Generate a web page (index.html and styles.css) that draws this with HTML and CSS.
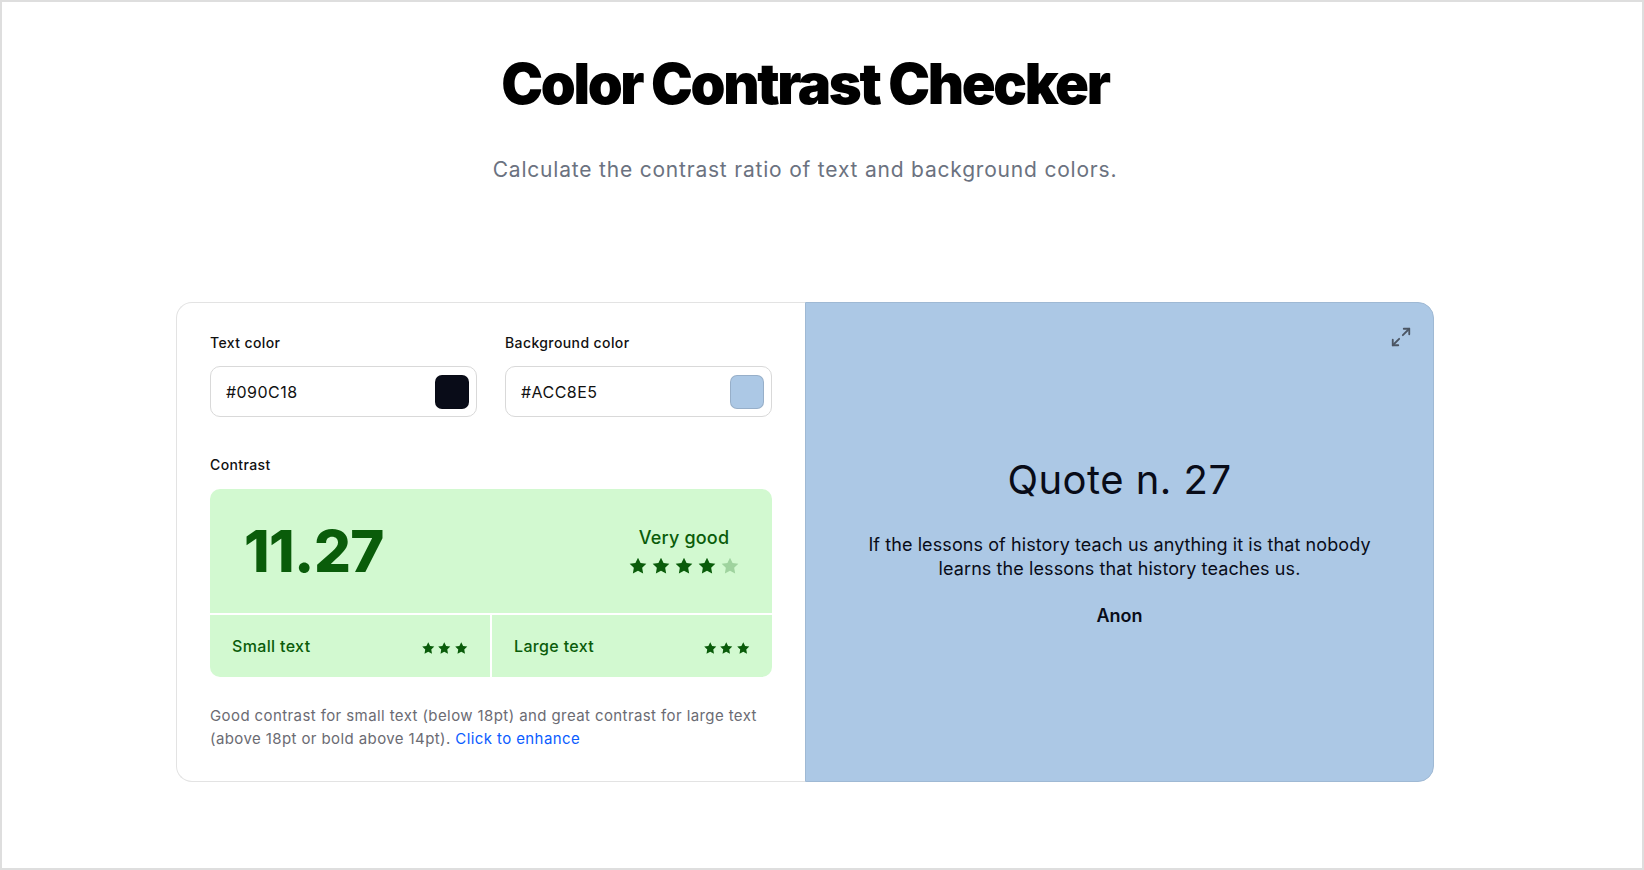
FILE: index.html
```html
<!DOCTYPE html>
<html lang="en">
<head>
<meta charset="utf-8">
<title>Color Contrast Checker</title>
<link rel="stylesheet" href="styles.css">
</head>
<body>
<div class="page">
  <h1 class="title">Color Contrast Checker</h1>
  <p class="subtitle">Calculate the contrast ratio of text and background colors.</p>

  <div class="card">
    <div class="controls">
      <div class="fields">
        <div class="field">
          <label class="label">Text color</label>
          <div class="input">
            <span class="input-value">#090C18</span>
            <span class="swatch swatch-dark"></span>
          </div>
        </div>
        <div class="field">
          <label class="label">Background color</label>
          <div class="input">
            <span class="input-value">#ACC8E5</span>
            <span class="swatch swatch-blue"></span>
          </div>
        </div>
      </div>

      <div class="label contrast-label">Contrast</div>
      <div class="result">
        <div class="result-main">
          <div class="ratio">11.27</div>
          <div class="rating">
            <div class="rating-text">Very good</div>
            <div class="stars stars-big">
              <svg viewBox="0 0 24 24"><path d="M12 2l3.09 6.26L22 9.27l-5 4.87 1.18 6.88L12 17.77l-6.18 3.25L7 14.14 2 9.27l6.91-1.01L12 2z"/></svg>
              <svg viewBox="0 0 24 24"><path d="M12 2l3.09 6.26L22 9.27l-5 4.87 1.18 6.88L12 17.77l-6.18 3.25L7 14.14 2 9.27l6.91-1.01L12 2z"/></svg>
              <svg viewBox="0 0 24 24"><path d="M12 2l3.09 6.26L22 9.27l-5 4.87 1.18 6.88L12 17.77l-6.18 3.25L7 14.14 2 9.27l6.91-1.01L12 2z"/></svg>
              <svg viewBox="0 0 24 24"><path d="M12 2l3.09 6.26L22 9.27l-5 4.87 1.18 6.88L12 17.77l-6.18 3.25L7 14.14 2 9.27l6.91-1.01L12 2z"/></svg>
              <svg class="star-off" viewBox="0 0 24 24"><path d="M12 2l3.09 6.26L22 9.27l-5 4.87 1.18 6.88L12 17.77l-6.18 3.25L7 14.14 2 9.27l6.91-1.01L12 2z"/></svg>
            </div>
          </div>
        </div>
        <div class="result-cell">
          <span>Small text</span>
          <div class="stars stars-small">
            <svg viewBox="0 0 24 24"><path d="M12 2l3.09 6.26L22 9.27l-5 4.87 1.18 6.88L12 17.77l-6.18 3.25L7 14.14 2 9.27l6.91-1.01L12 2z"/></svg>
            <svg viewBox="0 0 24 24"><path d="M12 2l3.09 6.26L22 9.27l-5 4.87 1.18 6.88L12 17.77l-6.18 3.25L7 14.14 2 9.27l6.91-1.01L12 2z"/></svg>
            <svg viewBox="0 0 24 24"><path d="M12 2l3.09 6.26L22 9.27l-5 4.87 1.18 6.88L12 17.77l-6.18 3.25L7 14.14 2 9.27l6.91-1.01L12 2z"/></svg>
          </div>
        </div>
        <div class="result-cell">
          <span>Large text</span>
          <div class="stars stars-small">
            <svg viewBox="0 0 24 24"><path d="M12 2l3.09 6.26L22 9.27l-5 4.87 1.18 6.88L12 17.77l-6.18 3.25L7 14.14 2 9.27l6.91-1.01L12 2z"/></svg>
            <svg viewBox="0 0 24 24"><path d="M12 2l3.09 6.26L22 9.27l-5 4.87 1.18 6.88L12 17.77l-6.18 3.25L7 14.14 2 9.27l6.91-1.01L12 2z"/></svg>
            <svg viewBox="0 0 24 24"><path d="M12 2l3.09 6.26L22 9.27l-5 4.87 1.18 6.88L12 17.77l-6.18 3.25L7 14.14 2 9.27l6.91-1.01L12 2z"/></svg>
          </div>
        </div>
      </div>

      <p class="note">Good contrast for small text (below 18pt) and great contrast for large text (above 18pt or bold above 14pt). <a class="note-link" href="#">Click to enhance</a></p>
    </div>

    <div class="preview">
      <button class="expand" aria-label="Fullscreen">
        <svg viewBox="0 0 24 24" fill="none" stroke="currentColor" stroke-width="2" stroke-linecap="round" stroke-linejoin="round"><polyline points="15 3 21 3 21 9"/><polyline points="9 21 3 21 3 15"/><line x1="21" y1="3" x2="14" y2="10"/><line x1="3" y1="21" x2="10" y2="14"/></svg>
      </button>
      <h2 class="quote-title">Quote n. 27</h2>
      <p class="quote-text">If the lessons of history teach us anything it is that nobody learns the lessons that history teaches us.</p>
      <div class="quote-author">Anon</div>
    </div>
  </div>
</div>
</body>
</html>
```

FILE: styles.css
```css
* { box-sizing: border-box; }

html, body {
  margin: 0;
  padding: 0;
  background: #ffffff;
}

body {
  font-family: Inter, "Noto Sans", "Liberation Sans", sans-serif;
  color: #090C18;
}

.page {
  height: 870px;
  border: 2px solid #dedede;
  padding: 48px 34px 0 0;
  display: flex;
  flex-direction: column;
  align-items: center;
}

.title {
  margin: 0;
  font-size: 56px;
  line-height: 68px;
  font-weight: 900;
  letter-spacing: -0.042em;
  color: #000;
}

.subtitle {
  margin: 38px 0 0;
  font-size: 21px;
  line-height: 28px;
  letter-spacing: 0.038em;
  color: #6b7280;
}

.card {
  margin-top: 118px;
  width: 1258px;
  height: 480px;
  display: flex;
}

.controls {
  width: 629px;
  border: 1px solid #e3e3e3;
  border-right: none;
  border-radius: 16px 0 0 16px;
  padding: 30px 33px 30px 33px;
  display: flex;
  flex-direction: column;
}

.controls > * {
  flex-shrink: 0;
}

.fields {
  display: grid;
  grid-template-columns: 1fr 1fr;
  gap: 28px;
}

.label {
  display: block;
  font-size: 14px;
  line-height: 20px;
  font-weight: 500;
  letter-spacing: 0.028em;
  color: #111;
}

.input {
  margin-top: 13px;
  height: 51px;
  border: 1px solid #d9d9d9;
  border-radius: 10px;
  display: flex;
  align-items: center;
  justify-content: space-between;
  padding: 0 7px 0 15px;
}

.input-value {
  font-size: 16px;
  letter-spacing: 0.028em;
  color: #111;
}

.swatch {
  width: 34px;
  height: 34px;
  border-radius: 7px;
  border: 1px solid rgba(0, 0, 0, 0.12);
}

.swatch-dark { background: #090C18; }
.swatch-blue { background: #ACC8E5; }

.contrast-label {
  margin-top: 38px;
}

.result {
  margin-top: 14px;
  display: grid;
  grid-template-columns: 1fr 1fr;
  grid-template-rows: 124px 62px;
  gap: 2px;
  border-radius: 10px;
  overflow: hidden;
  color: #0a5c0a;
}

.result-main {
  grid-column: 1 / 3;
  background: #d2f9d0;
  display: flex;
  align-items: center;
  justify-content: space-between;
  padding: 0 32px 0 34px;
}

.ratio {
  font-size: 58px;
  line-height: 1;
  font-weight: 800;
  letter-spacing: -0.01em;
}

.rating {
  display: flex;
  flex-direction: column;
  align-items: center;
  gap: 7px;
}

.rating-text {
  font-size: 18px;
  line-height: 22px;
  font-weight: 500;
  letter-spacing: 0.01em;
}

.stars {
  display: flex;
  fill: #0a5c0a;
}

.stars-big { gap: 3px; }
.stars-big svg { width: 20px; height: 20px; }
.stars-big .star-off { fill: #9fd39e; }

.stars-small { gap: 2px; margin-top: 4px; }
.stars-small svg { width: 14.5px; height: 14.5px; }

.result-cell {
  background: #d2f9d0;
  display: flex;
  align-items: center;
  justify-content: space-between;
  padding: 0 22px 0 22px;
  font-size: 16px;
  font-weight: 500;
  letter-spacing: 0.022em;
}

.note {
  margin: 27px 0 0;
  font-size: 15px;
  line-height: 23px;
  letter-spacing: 0.027em;
  color: #6b6b73;
}

.note-link {
  color: #0b5cff;
  text-decoration: none;
}

.preview {
  position: relative;
  width: 629px;
  background: #ACC8E5;
  border: 1px solid #9fb9d4;
  border-radius: 0 16px 16px 0;
  display: flex;
  flex-direction: column;
  align-items: center;
  justify-content: center;
  text-align: center;
  color: #090C18;
}

.expand {
  position: absolute;
  top: 23px;
  right: 21px;
  width: 22px;
  height: 22px;
  padding: 0;
  border: none;
  background: none;
  color: #4b5563;
}

.expand svg {
  width: 22px;
  height: 22px;
  display: block;
}

.quote-title {
  margin: 0;
  font-size: 40px;
  line-height: 48px;
  font-weight: 400;
  letter-spacing: 0.012em;
}

.quote-text {
  margin: 29px 0 0;
  max-width: 520px;
  font-size: 18px;
  line-height: 24px;
  letter-spacing: 0.005em;
}

.quote-author {
  margin-top: 23px;
  font-size: 18px;
  line-height: 24px;
  font-weight: 600;
}
```
